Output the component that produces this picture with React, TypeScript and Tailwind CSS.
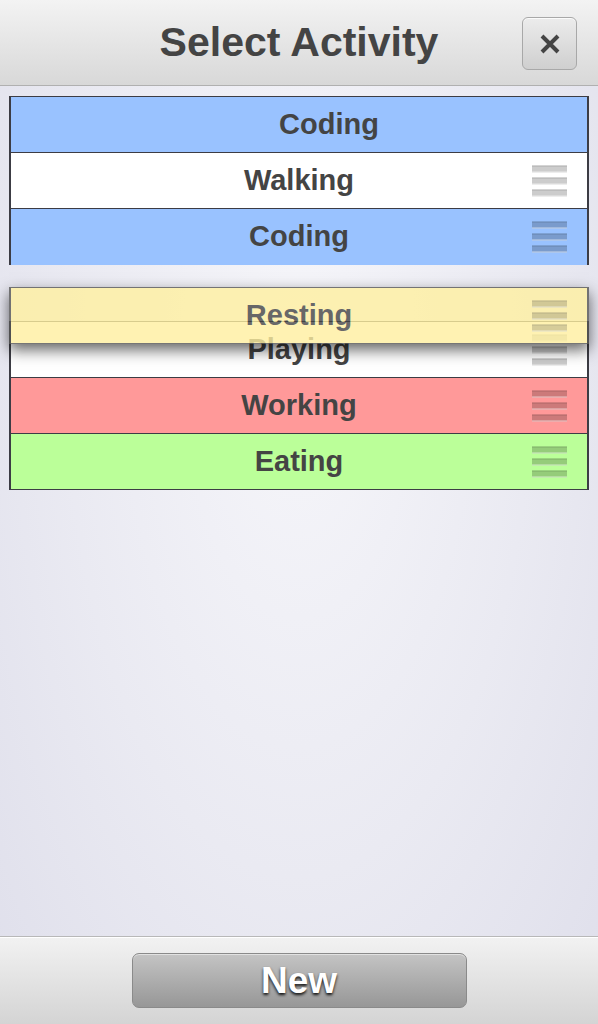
const font = { fontFamily: '"Liberation Sans", Arial, Helvetica, sans-serif' };

type Row = { label: string; color: string; handle?: boolean; first?: boolean; last?: boolean };

function Handle() {
  return (
    <div className="absolute right-[20px] top-1/2 flex w-[35px] -translate-y-1/2 flex-col gap-[5px]">
      {[0, 1, 2].map((i) => (
        <div
          key={i}
          className="h-[7px] border-t border-b border-t-black/15 border-b-white/60 bg-black/20"
        ></div>
      ))}
    </div>
  );
}

function ListRow({ label, color, handle = true, first, last }: Row) {
  return (
    <div
      className={`relative flex items-center justify-center border-x-2 border-[#3c3c44] ${color} ${
        first ? 'h-[57px] border-t pl-[60px]' : 'h-[56px]'
      } ${last ? '' : 'border-b'}`}
    >
      <span className="text-[29px] font-bold text-[#444]">{label}</span>
      {handle && <Handle />}
    </div>
  );
}

export default function App() {
  return (
    <div
      className="flex h-[1024px] w-[598px] flex-col overflow-hidden bg-[radial-gradient(ellipse_at_50%_35%,#f6f6fa_0%,#eaeaf2_55%,#dfdfeb_100%)]"
      style={font}
    >
      {/* Header */}
      <div className="relative flex h-[86px] shrink-0 items-center justify-center border-b border-[#b0b0b0] bg-gradient-to-b from-[#f3f3f3] to-[#d8d8d8]">
        <h1 className="text-[41px] font-bold text-[#444]">Select Activity</h1>
        <button className="absolute right-[21px] top-[17px] flex h-[53px] w-[55px] items-center justify-center rounded-[6px] border border-[#a8a8a8] bg-gradient-to-b from-[#ececec] to-[#cfcfcf] shadow-[inset_0_1px_0_rgba(255,255,255,0.8)]">
          <svg width="22" height="22" viewBox="0 0 22 22">
            <path d="M3 3 L19 19 M19 3 L3 19" stroke="#444" strokeWidth="4" strokeLinecap="butt" />
          </svg>
        </button>
      </div>

      {/* List */}
      <div className="flex-1 px-[9px] pt-[10px]">
        <div className="relative">
          <ListRow label="Coding" color="bg-[#99c2ff]" handle={false} first />
          <ListRow label="Walking" color="bg-white" />
          <ListRow label="Coding" color="bg-[#99c2ff]" last />
          <div className="h-[56px]"></div>
          <div className="border-t border-[#3c3c44]">
            <ListRow label="Playing" color="bg-white" />
          </div>
          <ListRow label="Working" color="bg-[#ff9999]" />
          <ListRow label="Eating" color="bg-[#bbff99]" />

          {/* Row being dragged */}
          <div className="absolute left-0 right-0 top-[191px] opacity-80 shadow-[0_6px_14px_rgba(0,0,0,0.75)]">
            <div className="relative flex h-[57px] items-center justify-center border-x-2 border-y border-[#555] bg-[#fff0a0]">
              <span className="text-[29px] font-bold text-[#444]">Resting</span>
              <Handle />
            </div>
          </div>
        </div>
      </div>

      {/* Footer */}
      <div className="flex h-[88px] shrink-0 items-center justify-center border-t border-[#b8b8b8] bg-gradient-to-b from-[#f2f2f2] to-[#d4d4d4] shadow-[inset_0_1px_0_#ffffff]">
        <button className="flex h-[55px] w-[335px] items-center justify-center rounded-[7px] border border-[#8a8a8a] bg-gradient-to-b from-[#c4c4c4] to-[#979797] shadow-[inset_0_1px_0_rgba(255,255,255,0.5)]">
          <span className="text-[37px] font-bold text-white [text-shadow:0_2px_3px_rgba(0,0,0,0.9)]">New</span>
        </button>
      </div>
    </div>
  );
}
